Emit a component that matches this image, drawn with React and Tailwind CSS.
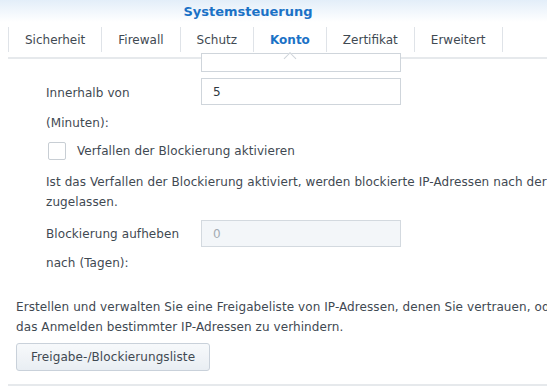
const tabs = ['Sicherheit', 'Firewall', 'Schutz', 'Konto', 'Zertifikat', 'Erweitert'];

function Tab({ label, active }) {
  return (
    <div className="relative flex h-[25px] items-center border-r border-[#dfe3e8] px-[16px]">
      <span className={active ? 'font-bold text-[#1b72c6]' : 'text-[#3f4952]'}>{label}</span>
      {active && (
        <span className="absolute left-1/2 top-[27px] z-10 h-[9px] w-[9px] -translate-x-1/2 rotate-45 border-l border-t border-[#cdd3d9] bg-white" />
      )}
    </div>
  );
}

export default function App() {
  return (
    <div className="h-[389px] w-[547px] overflow-hidden bg-white font-['DejaVu_Sans',sans-serif] text-[12px] tracking-[0.08px] text-[#3f4952]">
      {/* Header */}
      <div className="bg-gradient-to-b from-[#e3eef9] to-white pt-[2px]">
        <h1 className="pr-[51px] text-center text-[13px] font-bold leading-[20px] tracking-normal text-[#1b72c6]">Systemsteuerung</h1>
      </div>

      {/* Tabs */}
      <div className="relative ml-[8px] mt-[5px] border-b-2 border-[#e6e9ec] pb-[5px] tracking-normal">
        <div className="flex border-l border-[#dfe3e8]">
          {tabs.map((t) => (
            <Tab key={t} label={t} active={t === 'Konto'} />
          ))}
        </div>
      </div>

      {/* Scrolled content */}
      <div className="relative">
        <div className="ml-[201px] mt-[-6px] h-[19px] w-[200px] border border-[#cfd5db] bg-white" />

        <div className="pl-[46px] pt-[6px]">
          <div className="flex items-center">
            <span className="w-[155px] pt-[2px]">Innerhalb von</span>
            <div className="flex h-[27px] w-[200px] items-center border border-[#cfd5db] px-[11px] text-[#2e3740]">5</div>
          </div>
          <div className="mt-[6px] leading-[24px]">(Minuten):</div>

          <label className="mt-[7px] flex items-center gap-[11px] pl-[2px]">
            <span className="h-[18px] w-[18px] rounded-[2px] border border-[#c8ced4] bg-white" />
            <span>Verfallen der Blockierung aktivieren</span>
          </label>

          <p className="mt-[12px] whitespace-nowrap leading-[20px]">
            Ist das Verfallen der Blockierung aktiviert, werden blockierte IP-Adressen nach der
            <br />
            zugelassen.
          </p>

          <div className="mt-[8px] flex items-center">
            <span className="w-[155px] pt-[1px]">Blockierung aufheben</span>
            <div className="flex h-[27px] w-[200px] items-center border border-[#d3d9df] bg-[#f3f6f9] px-[11px] text-[#a3abb3]">0</div>
          </div>
          <div className="mt-[4px] leading-[24px]">nach (Tagen):</div>
        </div>

        <div className="pl-[16px] pt-[22px]">
          <p className="whitespace-nowrap leading-[20px]">
            Erstellen und verwalten Sie eine Freigabeliste von IP-Adressen, denen Sie vertrauen, oder
            <br />
            das Anmelden bestimmter IP-Adressen zu verhindern.
          </p>
          <button className="mt-[6px] h-[28px] rounded-[3px] border border-[#c9d1da] bg-gradient-to-b from-[#f7f9fb] to-[#e9eef3] px-[14px] text-[#3f4952]">
            Freigabe-/Blockierungsliste
          </button>
        </div>

        <div className="ml-[8px] mt-[13px] border-t-2 border-[#e6e9ec]" />
      </div>
    </div>
  );
}
